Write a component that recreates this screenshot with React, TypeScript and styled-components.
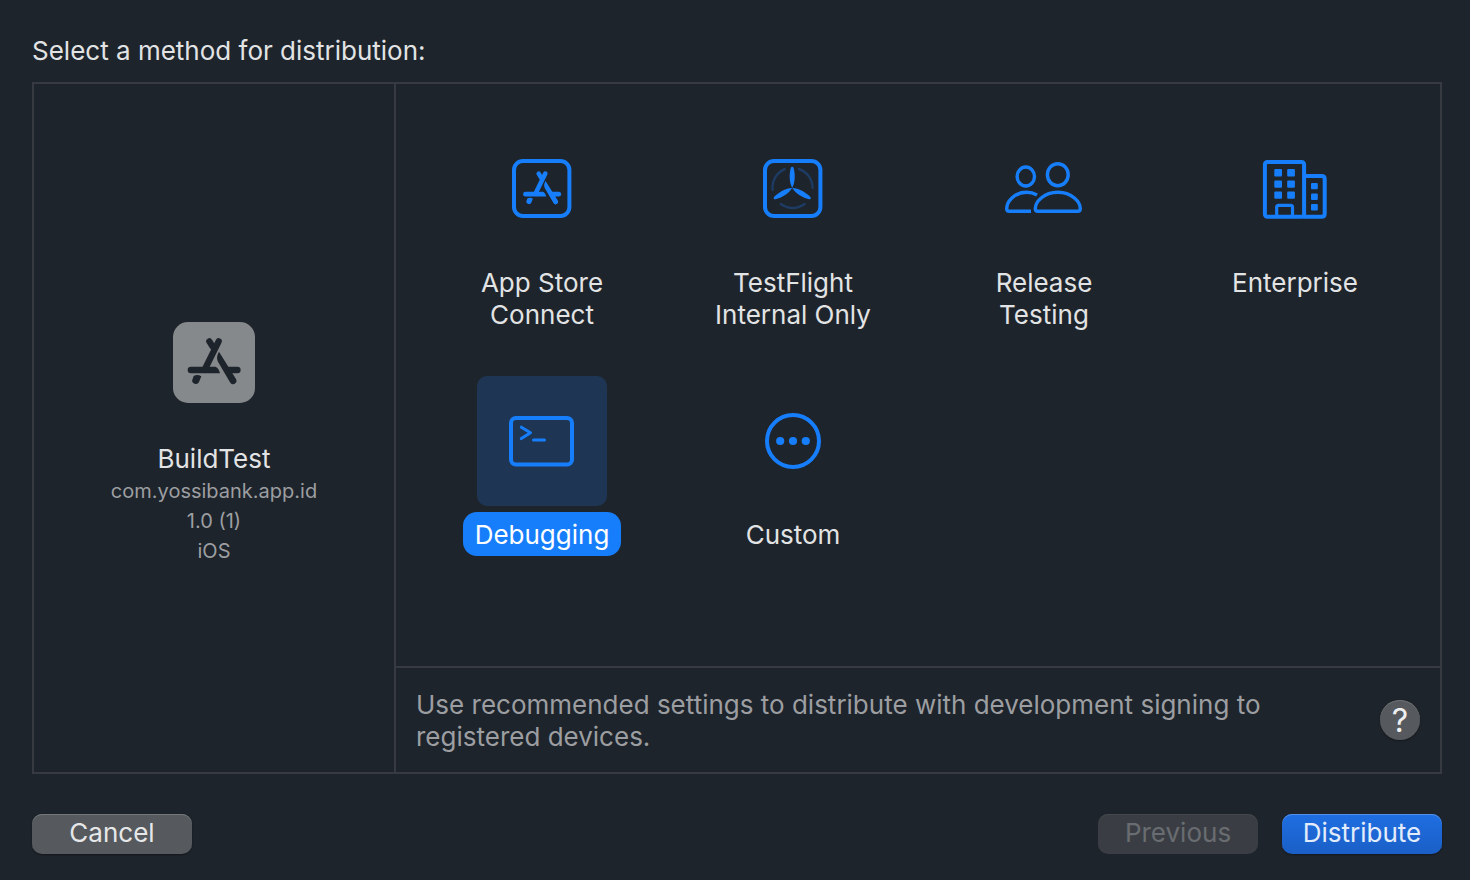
import React, { useState } from "react";
import styled, { createGlobalStyle } from "styled-components";

const color = {
  bg: "#1e242b",
  line: "#373a41",
  text: "#e2e3e4",
  muted: "#9c9ea1",
  blue: "#177efb",
  tile: "#1e3654",
  arc: "#1d3b63",
};

const GlobalStyle = createGlobalStyle`
  * { box-sizing: border-box; }
  body {
    margin: 0;
    background: ${color.bg};
    color: ${color.text};
    font-family: Inter, "Liberation Sans", sans-serif;
    font-size: 26px;
    line-height: 32px;
  }
  button { font: inherit; color: inherit; border: 0; margin: 0; padding: 0; cursor: default; }
`;

const Dialog = styled.main`
  display: flex;
  flex-direction: column;
  min-height: 100vh;
  padding: 35px 28px 26px 32px;
`;

const Title = styled.h1`
  margin: 0 0 15px;
  font-size: 26px;
  font-weight: 400;
`;

const Panel = styled.section`
  display: flex;
  flex: 1;
  border: 2px solid ${color.line};
`;

const Sidebar = styled.aside`
  display: flex;
  flex-direction: column;
  align-items: center;
  justify-content: center;
  flex: 0 0 362px;
  border-right: 2px solid ${color.line};
`;

const AppIcon = styled.svg`
  display: block;
  width: 82px;
  height: 82px;
  margin: 32px 0 39px;
`;

const AppName = styled.h2`
  margin: 0 0 1px;
  font-size: 26px;
  font-weight: 400;
`;

const AppDetail = styled.p`
  margin: 0;
  color: ${color.muted};
  font-size: 20px;
  line-height: 30px;
`;

const Content = styled.div`
  display: flex;
  flex: 1;
  flex-direction: column;
`;

const MethodGrid = styled.div`
  display: grid;
  flex: 1;
  grid-template-columns: repeat(4, 1fr);
  align-content: start;
  gap: 40px 31px;
  padding: 40px 35px 40px 36px;
`;

const Method = styled.button`
  display: flex;
  flex-direction: column;
  align-items: center;
  gap: 6px;
  background: none;
`;

const Tile = styled.span<{ $selected: boolean }>`
  display: block;
  width: 130px;
  height: 130px;
  border-radius: 10px;
  background: ${(p) => (p.$selected ? color.tile : "transparent")};
`;

const Glyph = styled.svg`
  display: block;
  width: 130px;
  height: 130px;
  fill: none;
  stroke: ${color.blue};
  stroke-width: 4;
  stroke-linecap: round;
  stroke-linejoin: round;
`;

const MethodLabel = styled.span<{ $selected: boolean }>`
  padding: 7px 12px 5px;
  border-radius: 14px;
  white-space: pre-line;
  color: ${(p) => (p.$selected ? "#fff" : color.text)};
  background: ${(p) => (p.$selected ? color.blue : "transparent")};
`;

const InfoBar = styled.div`
  display: flex;
  align-items: center;
  justify-content: space-between;
  gap: 40px;
  padding: 19px 20px;
  border-top: 2px solid ${color.line};
`;

const InfoText = styled.p`
  margin: 0;
  padding-top: 2px;
  color: ${color.muted};
`;

const HelpButton = styled.button`
  flex: none;
  width: 40px;
  height: 40px;
  padding-top: 2px;
  border-radius: 50%;
  color: #eeeff0;
  font-size: 32px;
  background: #565a5e;
  box-shadow: inset 0 1px 0 #6c7073, 0 1px 2px rgba(0, 0, 0, 0.35);
`;

const Footer = styled.footer`
  display: flex;
  justify-content: flex-end;
  gap: 24px;
  margin-top: 40px;
`;

type Variant = "plain" | "primary";

const PushButton = styled.button<{ $variant?: Variant }>`
  width: 160px;
  height: 40px;
  padding-bottom: 2px;
  border-radius: 10px;
  color: ${(p) => (p.$variant === "primary" ? "#e3ecfa" : "#e6e7e8")};
  background: ${(p) =>
    p.$variant === "primary" ? "linear-gradient(#1f6ee2, #1a5fc6)" : "#565a5e"};
  box-shadow: inset 0 1px 0 ${(p) => (p.$variant === "primary" ? "#5590e8" : "#74787b")},
    0 1px 2px rgba(0, 0, 0, 0.35);

  &:first-child { margin-right: auto; }

  &:disabled {
    color: #696c70;
    background: #3a3e44;
    box-shadow: inset 0 1px 0 #43484a;
  }
`;

/* App Store "A" made of three sticks, centred on the origin. */
const Sticks = () => (
  <>
    <path d="M14-59L-27 24M-14-59L-4-43" fill="none" stroke="currentColor" strokeWidth="19" strokeLinecap="round" />
    <g fill="currentColor" stroke="none">
      <path d="M-69 17H5Q14 21 18 37H-69a10 10 0 0 1 0-20z" />
      <path d="M15-28C9-18 7-8 12 2L48 64A10 10 0 0 0 66 54z" />
      <path d="M38 17H70a10 10 0 0 1 0 20H48z" />
      <path d="M-61 45Q-50 38-38 46L-45 63A10 10 0 0 1-64 53z" />
    </g>
  </>
);

const AppStoreGlyph = () => (
  <Glyph viewBox="0 0 130 130" aria-hidden="true" color={color.blue}>
    <rect x="37" y="37" width="55.4" height="55" rx="9" />
    <g transform="translate(65 63.7) scale(.239)"><Sticks /></g>
  </Glyph>
);

const blade = "M0 0C-3.2-6-3-14-1.4-20.2Q0-22.2 1.4-20.2C3-14 3.2-6 0 0z";

const TestFlightGlyph = () => (
  <Glyph viewBox="0 0 130 130" aria-hidden="true">
    <rect x="37" y="37" width="55.4" height="55" rx="9" />
    <g transform="translate(64.2 64)">
      <g fill={color.blue} stroke="none">
        <path d={blade} />
        <path d={blade} transform="rotate(120)" />
        <path d={blade} transform="rotate(240)" />
      </g>
      <path
        d="M-19.6 1.8A20 20 0 0 1-7.4-18.8M6.7-19A20 20 0 0 1 20.4-.3M-11.4 16A20 20 0 0 0 12.4 16"
        stroke={color.arc}
        strokeWidth="2.4"
      />
    </g>
  </Glyph>
);

const PeopleGlyph = () => (
  <Glyph viewBox="0 0 130 130" aria-hidden="true">
    <g strokeWidth="3.4">
      <ellipse cx="46.8" cy="52.5" rx="8.7" ry="9.5" />
      <ellipse cx="78.8" cy="50.7" rx="10.4" ry="11" />
      <path d="M59 87.3H98.6Q101.3 87.3 101.3 84.5C101.3 78 93 68.3 78.8 68.3S56.3 78 56.3 84.5Q56.3 87.3 59 87.3z" />
      <path strokeLinecap="butt" d="M52 87.3H30.2Q27.7 87.3 27.7 84.5C27.7 78 35 68.3 47.5 68.3C51.5 68.3 55 69.3 58 71" />
    </g>
  </Glyph>
);

const BuildingGlyph = () => (
  <Glyph viewBox="0 0 130 130" aria-hidden="true">
    <rect x="34.9" y="37.9" width="39.2" height="54.8" rx="2.5" />
    <path d="M74.1 52H91.6Q94.7 52 94.7 55V89.7Q94.7 92.7 91.6 92.7H74.1" />
    <path strokeWidth="3.2" d="M46.7 92V83.2Q46.7 81.3 48.6 81.3H60.6Q62.5 81.3 62.5 83.2V92" />
    <g fill={color.blue} stroke="none">
      {[45, 56.4, 67.4].map((y) => (
        <React.Fragment key={y}>
          <rect x="44.3" y={y} width="7.7" height="7.4" rx="1" />
          <rect x="57.2" y={y} width="7.7" height="7.4" rx="1" />
        </React.Fragment>
      ))}
      {[58.9, 69.5, 80].map((y) => (
        <rect key={y} x="81" y={y} width="6.8" height="6.4" rx="1" />
      ))}
    </g>
  </Glyph>
);

const TerminalGlyph = () => (
  <Glyph viewBox="0 0 130 130" aria-hidden="true">
    <rect x="34" y="42" width="61" height="46.6" rx="5" />
    <g strokeWidth="3">
      <path d="M44.3 51.2L53.5 56.8L44.3 62.6M56.5 64H67.5" />
    </g>
  </Glyph>
);

const CustomGlyph = () => (
  <Glyph viewBox="0 0 130 130" aria-hidden="true">
    <circle cx="65" cy="65" r="26" />
    <g fill={color.blue} stroke="none">
      <circle cx="52.2" cy="65" r="4.1" />
      <circle cx="65" cy="65" r="4.1" />
      <circle cx="77.8" cy="65" r="4.1" />
    </g>
  </Glyph>
);

const methods = [
  { id: "appstore", label: "App Store\nConnect", Icon: AppStoreGlyph },
  { id: "testflight", label: "TestFlight\nInternal Only", Icon: TestFlightGlyph },
  { id: "release", label: "Release\nTesting", Icon: PeopleGlyph },
  { id: "enterprise", label: "Enterprise", Icon: BuildingGlyph },
  { id: "debugging", label: "Debugging", Icon: TerminalGlyph },
  { id: "custom", label: "Custom", Icon: CustomGlyph },
];

export default function App() {
  const [selected, setSelected] = useState("debugging");

  return (
    <>
      <GlobalStyle />
      <Dialog>
        <Title>Select a method for distribution:</Title>
        <Panel>
          <Sidebar>
            <AppIcon viewBox="0 0 82 82" aria-hidden="true" color={color.bg}>
              <rect width="82" height="81" rx="15" fill="#86898c" />
              <g transform="translate(41 39) scale(.333)"><Sticks /></g>
            </AppIcon>
            <AppName>BuildTest</AppName>
            <AppDetail>com.yossibank.app.id</AppDetail>
            <AppDetail>1.0 (1)</AppDetail>
            <AppDetail>iOS</AppDetail>
          </Sidebar>
          <Content>
            <MethodGrid>
              {methods.map(({ id, label, Icon }) => (
                <Method
                  key={id}
                  type="button"
                  aria-pressed={id === selected}
                  onClick={() => setSelected(id)}
                >
                  <Tile $selected={id === selected}><Icon /></Tile>
                  <MethodLabel $selected={id === selected}>{label}</MethodLabel>
                </Method>
              ))}
            </MethodGrid>
            <InfoBar>
              <InfoText>
                Use recommended settings to distribute with development signing to registered devices.
              </InfoText>
              <HelpButton type="button" aria-label="Help">?</HelpButton>
            </InfoBar>
          </Content>
        </Panel>
        <Footer>
          <PushButton type="button">Cancel</PushButton>
          <PushButton type="button" disabled>Previous</PushButton>
          <PushButton type="button" $variant="primary">Distribute</PushButton>
        </Footer>
      </Dialog>
    </>
  );
}
